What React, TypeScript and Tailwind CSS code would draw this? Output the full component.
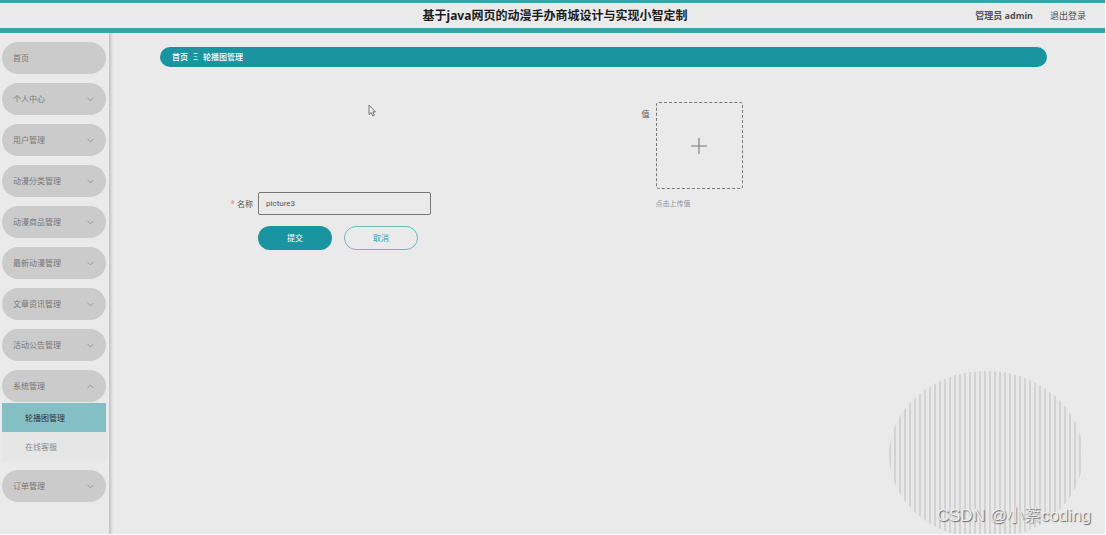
import { ChevronDown, ChevronUp, Plus } from "lucide-react";

type MenuItem = { label: string; leaf?: boolean; children?: { label: string; active?: boolean }[] };

const menu: MenuItem[] = [
  { label: "首页", leaf: true },
  { label: "个人中心" },
  { label: "用户管理" },
  { label: "动漫分类管理" },
  { label: "动漫商品管理" },
  { label: "最新动漫管理" },
  { label: "文章资讯管理" },
  { label: "活动公告管理" },
  { label: "系统管理", children: [{ label: "轮播图管理", active: true }, { label: "在线客服" }] },
  { label: "订单管理" },
];

function Header() {
  return (
    <header className="z-20 grid h-[33px] grid-cols-[1fr_auto_1fr] items-center border-t-3 border-b-5 border-[#3aa2a8] bg-[#eaeaea] pr-[19px]">
      <h1 className="col-start-2 pl-6 text-[12px] leading-4 font-bold text-[#1c1c1c]">
        基于java网页的动漫手办商城设计与实现小智定制
      </h1>
      <div className="flex items-center justify-end gap-[17px] text-[9px] leading-4 text-[#505050]">
        <span className="font-bold">管理员 admin</span>
        <button type="button">退出登录</button>
      </div>
    </header>
  );
}

function Sidebar() {
  return (
    <nav className="z-10 w-[109px] shrink-0 py-[9px] pr-[3px] pl-[2px] shadow-[1px_0_3px_1px_rgba(0,0,0,0.18)]">
      <ul className="flex flex-col gap-[9px]">
        {menu.map((item) => (
          <li key={item.label}>
            <button
              type="button"
              className="flex h-8 w-full items-center justify-between rounded-full bg-[#cbcbcb] px-[11px] text-[8px] text-[#777]"
            >
              <span>{item.label}</span>
              {item.leaf ? null : item.children ? (
                <ChevronUp className="-mr-px size-[11px] text-[#929292]" strokeWidth={2} />
              ) : (
                <ChevronDown className="-mr-px size-[11px] text-[#929292]" strokeWidth={2} />
              )}
            </button>
            {item.children && (
              <ul className="mt-px">
                {item.children.map((child) => (
                  <li key={child.label}>
                    <a
                      href="#"
                      className={
                        child.active
                          ? "flex h-[29px] items-center bg-[#83bfc5] pl-[23px] text-[8px] text-[#333]"
                          : "flex h-[29px] items-center bg-[#e6e6e6] pl-[23px] text-[8px] text-[#8c8c8c]"
                      }
                    >
                      {child.label}
                    </a>
                  </li>
                ))}
              </ul>
            )}
          </li>
        ))}
      </ul>
    </nav>
  );
}

const stripes = Array.from({ length: 39 }, (_, i) => i * 5);

function StripedDisc() {
  return (
    <svg className="absolute right-[22px] bottom-0 h-[163px] w-[194px]" viewBox="0 0 194 163" aria-hidden="true">
      <clipPath id="disc">
        <ellipse cx="97" cy="84" rx="97" ry="84" />
      </clipPath>
      <g clipPath="url(#disc)">
        <rect width="194" height="163" fill="#e8e8e8" />
        {stripes.map((x) => (
          <rect key={x} x={x} width="2" height="163" fill="#d3d3d3" />
        ))}
      </g>
    </svg>
  );
}

export default function App() {
  return (
    <div className="relative flex min-h-screen flex-col overflow-hidden border-r border-b border-white bg-[#eaeaea] font-['Noto_Sans','Noto_Sans_CJK_SC',sans-serif]">
      <Header />
      <div className="flex flex-1">
        <Sidebar />
        <main className="flex-1 pt-[14px] pr-[58px] pl-[51px]">
          <div className="flex h-5 items-center gap-[5px] rounded-full bg-[#1b94a1] px-3 text-[8px] font-medium text-white">
            <a href="#">首页</a>
            <span className="font-normal">Ξ</span>
            <span>轮播图管理</span>
          </div>
          <form className="mt-[35px] text-[8px] text-[#555]">
            <div className="grid grid-cols-2 items-end">
              <div className="flex items-center">
                <label htmlFor="name" className="w-[98px] pr-[5px] text-right">
                  <span className="text-[#f08080]">*</span> 名称
                </label>
                <input
                  id="name"
                  defaultValue="picture3"
                  className="h-[23px] w-[173px] rounded-[2px] border border-[#777] bg-transparent px-[7px] font-['Roboto',sans-serif]"
                />
              </div>
              <div className="flex items-start">
                <label htmlFor="upload" className="w-[52px] pt-[6px] pr-[6px] text-right leading-3">
                  值
                </label>
                <div>
                  <button
                    id="upload"
                    type="button"
                    className="flex size-[87px] items-center justify-center rounded-[3px] border border-dashed border-[#777]"
                  >
                    <Plus className="size-[26px] text-[#777]" strokeWidth={1} />
                  </button>
                  <p className="pt-1 text-[7px] leading-[22px] text-[#8a93a0]">点击上传值</p>
                </div>
              </div>
            </div>
            <div className="mt-[11px] flex gap-3 pl-[98px]">
              <button type="button" className="h-6 w-[74px] rounded-full bg-[#1b94a1] text-white">
                提交
              </button>
              <button type="button" className="h-6 w-[74px] rounded-full border border-[#6bb9c1] text-[#3a9fa9]">
                取消
              </button>
            </div>
          </form>
        </main>
      </div>
      <StripedDisc />
      <svg className="absolute top-[104px] left-[368px] h-[13px] w-2" viewBox="0 0 8 13" aria-hidden="true">
        <path d="M1 1v9.5l2.2-2 1.6 3.5 1.5-.7-1.5-3.4h2.7z" fill="#eee" stroke="#777" strokeWidth="1" />
      </svg>
      <p className="absolute right-[14px] bottom-[6px] font-['Liberation_Sans','Noto_Sans_CJK_SC',sans-serif] text-[17px] leading-6 font-light text-[#ececec] [text-shadow:1px_1px_1px_#666]">
        CSDN @小蔡coding
      </p>
    </div>
  );
}
